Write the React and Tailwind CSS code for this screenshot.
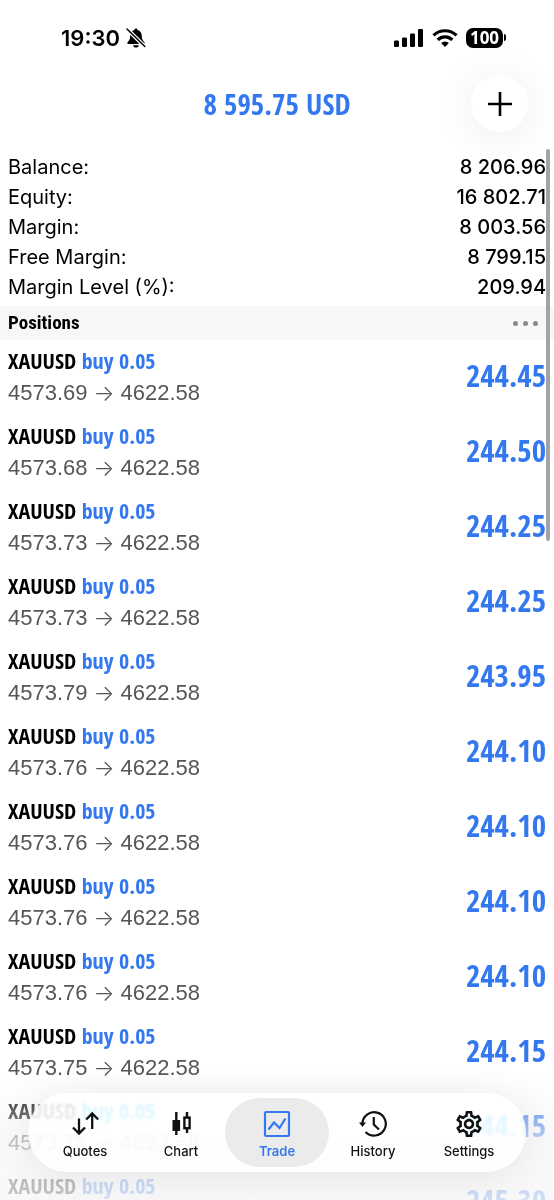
import { useState } from 'react';

const account = [
  { label: 'Balance:', value: '8 206.96' },
  { label: 'Equity:', value: '16 802.71' },
  { label: 'Margin:', value: '8 003.56' },
  { label: 'Free Margin:', value: '8 799.15' },
  { label: 'Margin Level (%):', value: '209.94' },
];

const positions = [
  { id: 1, open: '4573.69', profit: '244.45' },
  { id: 2, open: '4573.68', profit: '244.50' },
  { id: 3, open: '4573.73', profit: '244.25' },
  { id: 4, open: '4573.73', profit: '244.25' },
  { id: 5, open: '4573.79', profit: '243.95' },
  { id: 6, open: '4573.76', profit: '244.10' },
  { id: 7, open: '4573.76', profit: '244.10' },
  { id: 8, open: '4573.76', profit: '244.10' },
  { id: 9, open: '4573.76', profit: '244.10' },
  { id: 10, open: '4573.75', profit: '244.15' },
  { id: 11, open: '4573.75', profit: '244.15' },
  { id: 12, open: '4573.52', profit: '245.30' },
];

const tabs = [
  { name: 'Quotes', icon: QuotesIcon },
  { name: 'Chart', icon: ChartIcon },
  { name: 'Trade', icon: TradeIcon },
  { name: 'History', icon: HistoryIcon },
  { name: 'Settings', icon: SettingsIcon },
];

function QuotesIcon() {
  return (
    <svg width="28" height="28" viewBox="0 0 28 28" fill="none" stroke="currentColor" strokeWidth="2.3">
      <path d="M8 8.500v15M2 17.500l6 6 6-6" />
      <path d="M21.200 19V3.500M15.200 9.500l6-6 6 6" />
    </svg>
  );
}

function ChartIcon() {
  return (
    <svg width="28" height="28" viewBox="0 0 28 28" fill="none" stroke="currentColor" strokeWidth="2.4">
      <path d="M9.300 2v23M20 2v6M20 18v5" />
      <rect x="5.500" y="10" width="7.600" height="11" fill="currentColor" stroke="none" />
      <rect x="17.400" y="7.600" width="5.200" height="10.600" />
    </svg>
  );
}

function TradeIcon() {
  return (
    <svg width="28" height="28" viewBox="0 0 28 28" fill="none" stroke="currentColor" strokeWidth="2.2">
      <rect x="2" y="2" width="24" height="24" rx="1" />
      <path d="M5.500 19.500l5.500-7 5.500 5.500 6-9.500" />
    </svg>
  );
}

function HistoryIcon() {
  return (
    <svg width="28" height="28" viewBox="0 0 28 28" fill="none" stroke="currentColor" strokeWidth="2.2">
      <path d="M3.400 13.800A11.700 11.700 0 1 1 6.600 21.900" />
      <path d="M0 12.600h7l-3.500 4.400z" fill="currentColor" stroke="none" />
      <path d="M14.800 7v7.500l5.200 5" />
    </svg>
  );
}

function SettingsIcon() {
  return (
    <svg width="28" height="28" viewBox="1.300 1.300 21.400 21.400" fill="currentColor">
      <path d="M19.430 12.980c.040-.320.070-.640.070-.980 0-.340-.030-.660-.070-.980l2.110-1.650c.190-.150.240-.420.120-.640l-2-3.460c-.090-.160-.260-.250-.440-.250-.060 0-.120.010-.170.030l-2.490 1c-.520-.400-1.080-.730-1.690-.980l-.380-2.650C14.460 2.180 14.250 2 14 2h-4c-.250 0-.460.180-.490.420l-.380 2.650c-.610.250-1.170.590-1.690.980l-2.490-1c-.060-.020-.120-.030-.180-.030-.170 0-.340.090-.430.250l-2 3.460c-.130.220-.070.490.120.640l2.110 1.650c-.040.320-.070.650-.070.980 0 .330.030.660.070.980l-2.110 1.650c-.190.150-.240.420-.120.640l2 3.460c.090.160.260.250.440.250.060 0 .120-.010.170-.030l2.490-1c.520.400 1.080.730 1.690.980l.380 2.650c.030.240.240.420.490.420h4c.250 0 .460-.180.490-.420l.380-2.650c.610-.250 1.170-.590 1.690-.980l2.490 1c.060.020.120.030.180.030.170 0 .340-.090.430-.250l2-3.460c.120-.220.070-.490-.120-.640l-2.110-1.650zm-1.980-1.710c.040.310.050.520.050.730 0 .210-.020.430-.050.730l-.140 1.130.890.700 1.080.840-.700 1.210-1.270-.510-1.040-.420-.900.680c-.430.320-.840.560-1.250.730l-1.060.430-.160 1.130-.200 1.350h-1.400l-.190-1.350-.160-1.130-1.060-.430c-.430-.180-.830-.410-1.230-.710l-.910-.700-1.060.430-1.270.510-.700-1.210 1.080-.840.890-.700-.140-1.130c-.030-.310-.050-.540-.050-.740s.020-.430.050-.730l.140-1.130-.890-.700-1.080-.840.700-1.210 1.270.510 1.040.420.900-.680c.430-.320.840-.560 1.250-.730l1.060-.430.160-1.130.200-1.350h1.390l.190 1.350.160 1.130 1.060.430c.430.180.830.410 1.230.710l.910.700 1.060-.430 1.270-.510.700 1.210-1.070.850-.890.700.140 1.130zM12 8c-2.210 0-4 1.790-4 4s1.790 4 4 4 4-1.790 4-4-1.790-4-4-4zm0 6c-1.100 0-2-.900-2-2s.900-2 2-2 2 .900 2 2-.900 2-2 2z" />
    </svg>
  );
}

function StatusBar() {
  return (
    <div className="flex h-[75px] items-center justify-between pr-12 pl-[61px]">
      <div className="flex items-center gap-1.5 text-[22px] leading-6 font-semibold">
        <span>19:30</span>
        <svg width="20" height="20" viewBox="0 0 20 20">
          <path d="M10 .500c-.900 0-1.500.600-1.500 1.400C5.600 2.600 4.300 5 4.200 8c-.100 3.400-1.100 4.800-2.600 6.200-.700.700-.300 1.800.700 1.800h15.400c1 0 1.400-1.100.700-1.800-1.500-1.400-2.500-2.800-2.600-6.200-.100-3-1.400-5.400-4.300-6.100 0-.800-.600-1.400-1.500-1.400zM7 17.200c.400 1.400 1.500 2.300 3 2.300s2.600-.900 3-2.300z" fill="#000" />
          <path d="M1 1l17.800 17.500" stroke="#fff" strokeWidth="4" />
          <path d="M1 1l17.800 17.500" stroke="#000" strokeWidth="1.500" strokeLinecap="round" />
        </svg>
      </div>
      <div className="flex items-center gap-2">
        <svg width="30" height="18" viewBox="0 0 30 18">
          <rect x="0" y="11.500" width="5" height="6.500" rx="1.300" />
          <rect x="8" y="8.500" width="5" height="9.500" rx="1.300" />
          <rect x="16" y="4.500" width="5" height="13.500" rx="1.300" />
          <rect x="24" y="0" width="5" height="18" rx="1.300" />
        </svg>
        <svg width="26" height="18" viewBox="0 0 26 18" fill="none" stroke="#000" strokeWidth="3.200">
          <path d="M1.500 6.400a16.500 16.500 0 0 1 23 0" />
          <path d="M5.700 10.800a10.400 10.400 0 0 1 14.600 0" />
          <path d="M13 18l-3.900-3.900a5.600 5.600 0 0 1 7.800 0z" fill="#000" stroke="none" />
        </svg>
        <div className="flex items-center gap-px">
          <span className="flex h-5 w-[37px] items-center justify-center rounded-[7px] bg-black font-['Open_Sans',sans-serif] text-[17px] leading-5 font-bold text-white">
            100
          </span>
          <span className="h-[7px] w-[2px] rounded-r bg-black" />
        </div>
      </div>
    </div>
  );
}

function Position({ position }) {
  return (
    <li className="flex h-[75px] items-center justify-between px-2 pb-1.5">
      <div>
        <p className="font-['Open_Sans_Condensed','Roboto_Condensed',sans-serif] text-[22px] leading-9 font-bold">
          XAUUSD <span className="text-[#3478f0]">buy 0.05</span>
        </p>
        <p className="flex items-center gap-1.5 font-['Liberation_Sans',sans-serif] text-[22px] leading-[30px] text-[#55555a]">
          {position.open}
          <span className="font-[Inter,sans-serif] leading-[30px] font-light">→</span>
          4622.58
        </p>
      </div>
      <span className="font-['Open_Sans_Condensed','Roboto_Condensed',sans-serif] text-[31px] leading-9 font-bold text-[#3478f0]">
        {position.profit}
      </span>
    </li>
  );
}

export default function App() {
  const [activeTab, setActiveTab] = useState('Trade');

  return (
    <div className="relative flex h-screen flex-col overflow-hidden bg-white font-[Inter,sans-serif] text-black">
      <StatusBar />

      <header className="grid h-[57px] shrink-0 grid-cols-[1fr_auto_1fr] items-center px-[26px]">
        <h1 className="col-start-2 font-['Open_Sans_Condensed','Roboto_Condensed',sans-serif] text-[29px] leading-8 font-bold text-[#3478f0]">
          8 595.75 USD
        </h1>
        <button
          type="button"
          aria-label="New order"
          className="flex size-[57px] items-center justify-center justify-self-end rounded-full bg-white shadow-[0_4px_40px_rgba(0,0,0,0.08)]"
        >
          <svg width="24" height="24" viewBox="0 0 24 24" stroke="currentColor" strokeWidth="2.600">
            <path d="M12 0v24M0 12h24" />
          </svg>
        </button>
      </header>

      <main className="flex min-h-0 flex-1 flex-col pt-5">
        <dl className="shrink-0 px-2">
          {account.map((row) => (
            <div key={row.label} className="flex justify-between text-xl leading-[30px]">
              <dt>{row.label}</dt>
              <dd className="font-medium">{row.value}</dd>
            </div>
          ))}
        </dl>

        <div className="mt-1 flex h-[34px] shrink-0 items-center justify-between bg-[#f7f7f7] pr-4 pl-2">
          <h2 className="font-['Roboto_Condensed','Open_Sans_Condensed',sans-serif] text-[19px] leading-6 font-bold">Positions</h2>
          <button type="button" aria-label="Position options" className="flex gap-[5px]">
            <span className="size-[5px] rounded-full bg-[#8a8a8e]" />
            <span className="size-[5px] rounded-full bg-[#8a8a8e]" />
            <span className="size-[5px] rounded-full bg-[#8a8a8e]" />
          </button>
        </div>

        <ul>
          {positions.map((position) => (
            <Position key={position.id} position={position} />
          ))}
        </ul>
      </main>

      {/* scroll indicator */}
      <div className="absolute top-[149px] right-1 h-[392px] w-1 rounded-full bg-[#a3a3a3]" />

      {/* fade behind the tab bar */}
      <div className="pointer-events-none absolute inset-x-0 bottom-0 h-32 bg-linear-to-b from-[#f7f7f7]/0 via-[#f7f7f7]/65 to-[#f7f7f7]/80" />

      <nav className="absolute inset-x-7 bottom-7 flex h-[79px] rounded-full bg-white/85 px-[9px] shadow-[0_4px_40px_rgba(0,0,0,0.09)] backdrop-blur-[1px] backdrop-hue-rotate-[-25deg] backdrop-saturate-200">
        {tabs.map(({ name, icon: Icon }) => {
          const active = name === activeTab;
          return (
            <button
              key={name}
              type="button"
              onClick={() => setActiveTab(name)}
              className={`relative flex flex-1 flex-col items-center gap-[3px] pt-[17px] text-[13px] leading-5 ${
                active ? 'font-semibold text-[#3478f0]' : 'font-medium text-[#111]'
              }`}
            >
              {active && <span className="absolute -inset-x-1 inset-y-[5px] -z-10 rounded-full bg-[#ebebeb]" />}
              <Icon />
              {name}
            </button>
          );
        })}
      </nav>
    </div>
  );
}
